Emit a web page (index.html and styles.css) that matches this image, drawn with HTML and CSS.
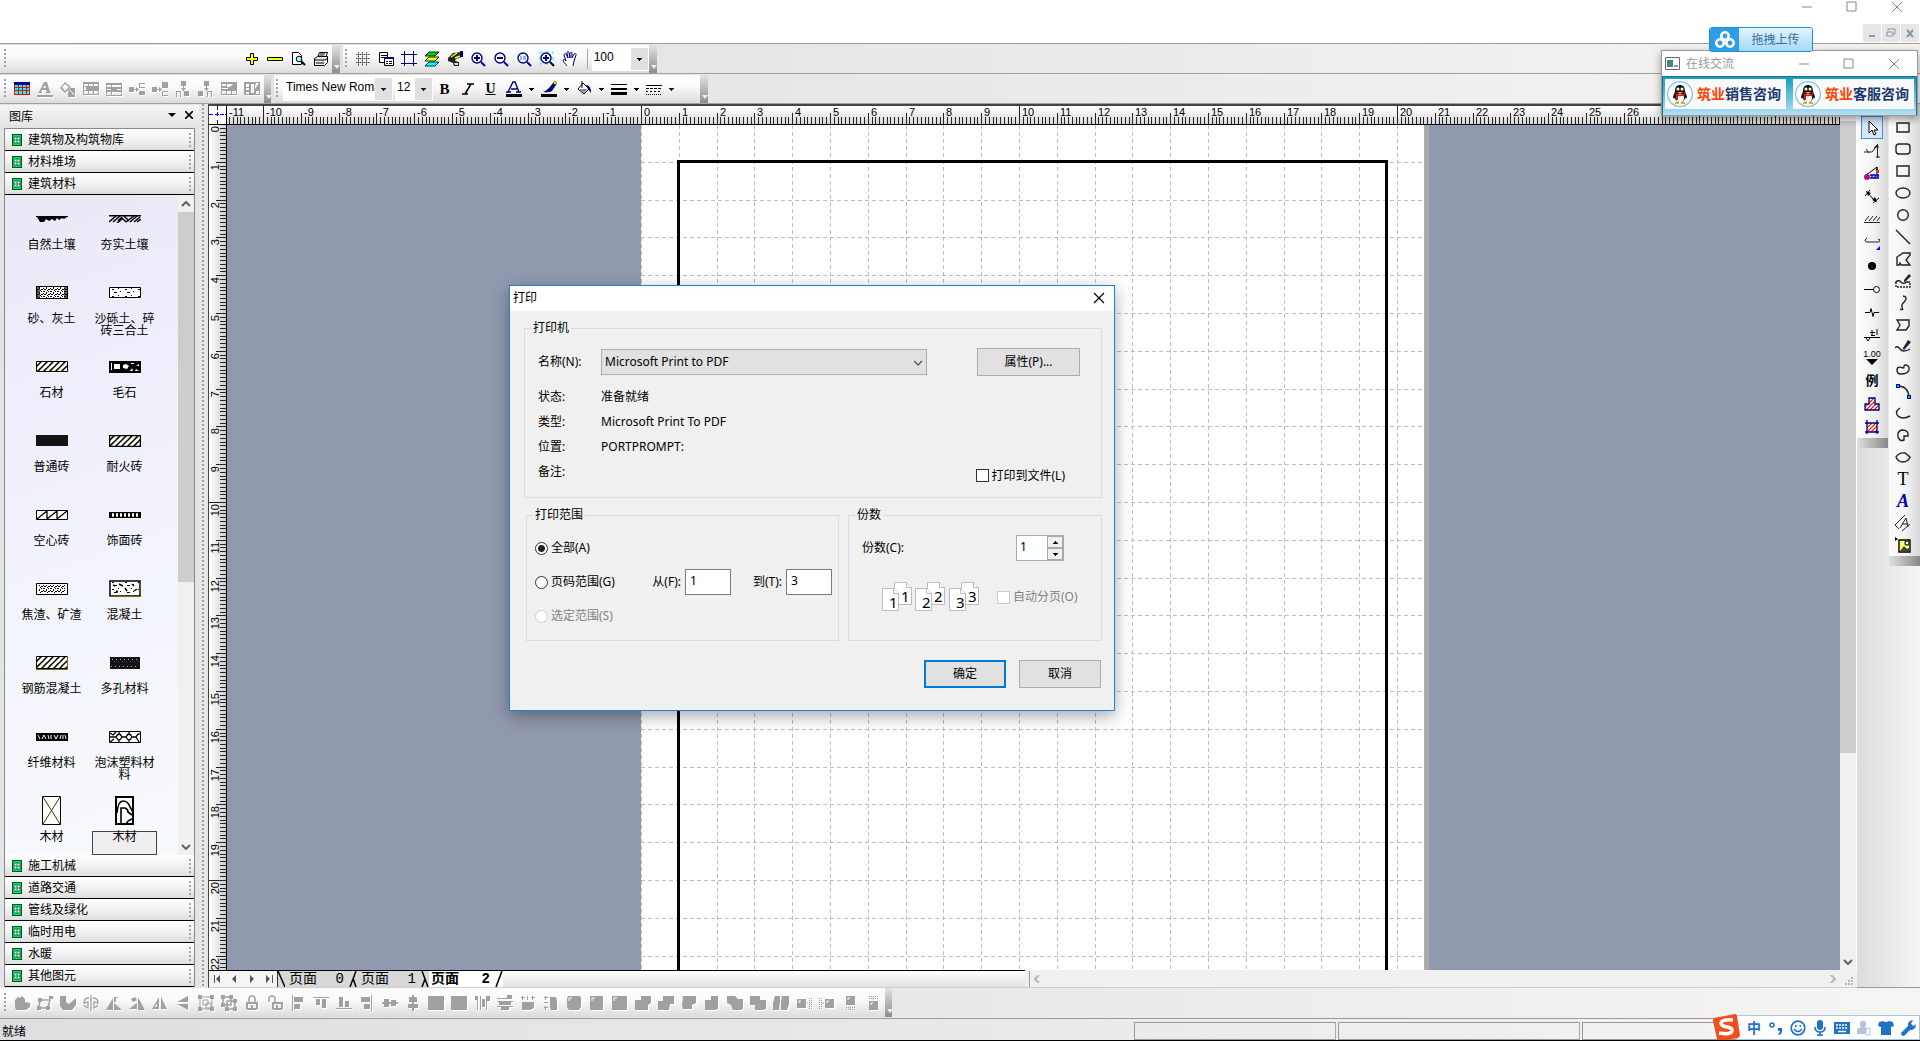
FILE: index.html
```html
<!DOCTYPE html>
<html lang="zh-CN">
<head>
<meta charset="utf-8">
<title>打印</title>
<link rel="stylesheet" href="styles.css">
</head>
<body>
<svg class="defs" aria-hidden="true">
  <defs>
    <pattern id="p-hatch" width="6" height="6" patternUnits="userSpaceOnUse"><path d="M-1 7L7-1M-1 1L1-1M5 7L7 5" stroke="#000" stroke-width="1.5"/><path d="M1 4L4 1" stroke="#606000" stroke-width=".9"/></pattern>
    <pattern id="p-dense" width="7" height="5" patternUnits="userSpaceOnUse"><path d="M0 0h2v1h-2zM3 1h1v2h-1zM5 0h1v1h-1zM1 3h2v1h-2zM5 3h2v1h-2zM4 4h1v1h-1zM0 2h1v1h-1z" fill="#000"/></pattern>
    <pattern id="p-sparse" width="13" height="7" patternUnits="userSpaceOnUse"><path d="M3 2h2v1h-2zM9 1h1v1h-1zM5 5h3v1h-3zM11 4h1v1h-1z" fill="#000"/></pattern>
    <pattern id="p-red" width="4" height="4" patternUnits="userSpaceOnUse"><rect width="4" height="4" fill="#fff"/><path d="M-1 5L5-1M-1 1L1-1M3 5L5 3" stroke="#f00" stroke-width="1.2"/></pattern>
    <symbol id="lib" viewBox="0 0 10 12"><path d="M0 0h10v12H0z" fill="#00562c"/><path d="M1 1h8v10H1z" fill="#00e060"/><path d="M2 3h6v6H2z" fill="#fff"/><path d="M2 3h6v6H2zM5 3v6M2 6h6" fill="none" stroke="#008040"/></symbol>
    <symbol id="up" viewBox="0 0 10 6"><path d="M1 5l4-4 4 4" fill="none" stroke="currentColor" stroke-width="2"/></symbol>
    <symbol id="down" viewBox="0 0 10 6"><path d="M1 1l4 4 4-4" fill="none" stroke="currentColor" stroke-width="2"/></symbol>
    <symbol id="tri" viewBox="0 0 5 3"><path d="M0 0h5v1H0zM1 1h3v1H1zM2 2h1v1H2z"/></symbol>
    <symbol id="penguin" viewBox="0 0 26 28"><circle cx="13" cy="14" r="12.4" fill="#fff" stroke="#7ec8f0" stroke-width="1.4"/><path d="M6 17c0-2 2-4 2-6 0-4 2-6 5-6s5 2 5 6c0 2 2 4 2 6 0 1-1 2-2 1 0 2-2 4-5 4s-5-2-5-4c-1 1-2 0-2-1z" fill="#151515"/><ellipse cx="13" cy="18" rx="4" ry="4" fill="#fff"/><circle cx="11" cy="9" r="1.5" fill="#fff"/><circle cx="15" cy="9" r="1.5" fill="#fff"/><path d="M10 12h6l-3 2zM8 22h4v2H8zM14 22h4v2h-4z" fill="#f5a500"/><path d="M8 13q5 3 10 0v2q-4 2-7 1v4H9v-5z" fill="#e01515"/></symbol>
  </defs>
</svg>

<header class="titlebar">
  <div class="win-controls">
    <button aria-label="最小化"><svg width="12" height="12"><path d="M1 6h10"/></svg></button>
    <button aria-label="最大化"><svg width="12" height="12"><path d="M1 1h9v9H1z"/></svg></button>
    <button aria-label="关闭"><svg width="12" height="12"><path d="M1 1l10 10M11 1L1 11"/></svg></button>
  </div>
  <div class="mdi-controls">
    <button aria-label="最小化文档"><svg width="12" height="12"><path d="M3 9h6" stroke-width="2"/></svg></button>
    <button aria-label="还原文档"><svg width="12" height="12"><path d="M3 4V2h7v5H8M2 5h6v4H2z"/></svg></button>
    <button aria-label="关闭文档"><svg width="12" height="12"><path d="M3 3l6 7M9 3l-6 7" stroke-width="2"/></svg></button>
  </div>
</header>

<div class="toolbars">
  <div class="toolrow">
    <div class="toolbar tb-file"><i class="grip"></i><span class="spring"></span>
      <button class="tool" aria-label="添加页"><svg width="16" height="16"><path d="M6.500 2.500h3v4h4v3h-4v4h-3v-4h-4v-3h4z" fill="#ff0" stroke="#000"/></svg></button>
      <button class="tool" aria-label="删除页"><svg width="16" height="16"><path d="M.5 6.500h15v3H.5z" fill="#ff0" stroke="#000"/></svg></button>
      <button class="tool" aria-label="打印预览"><svg width="16" height="16"><path d="M2.500 1.500h6l3 3v9h-9z" fill="#fff" stroke="#000"/><circle cx="9" cy="8" r="2.800" fill="#9ff" stroke="#000"/><path d="M11 10l4 4" stroke="#000" stroke-width="2"/></svg></button>
      <button class="tool" aria-label="打印"><svg width="16" height="16"><path d="M4.500 6.500l2-5h8l-2 5" fill="#fff" stroke="#000"/><path d="M1.500 7.500l3-2h10v6l-3 3h-10z" fill="#eee" stroke="#000"/><path d="M1 9h11l3-2M3 12h8M7 3h5M6 5h5" stroke="#000" fill="none"/><path d="M9 10h2v1H9z" fill="#fd0"/></svg></button>
      <i class="cap"></i></div>
    <div class="toolbar tb-view"><i class="grip"></i>
      <button class="tool" aria-label="网格"><svg width="16" height="16"><path d="M1 3.500h14M1 7.500h14M1 11.500h14M3.500 1v14M7.500 1v14M11.500 1v14" stroke="#333" stroke-dasharray="1 1"/><path d="M1 3.500h14M1 7.500h14M1 11.500h14M3.500 1v14M7.500 1v14M11.500 1v14" stroke="#555" stroke-width=".6"/></svg></button>
      <button class="tool" aria-label="页面设置"><svg width="16" height="16"><path d="M1.500 1.500h8v10h-8z" fill="#fff" stroke="#000"/><path d="M3 4.500h6M3 6.500h3" stroke="#000"/><path d="M6.500 6.500h9v8h-9z" fill="#fff" stroke="#000"/><path d="M6 7h10" stroke="#006" stroke-width="2"/><path d="M8 10.500h2M11 10.500h3M8 12.500h2M11 12.500h3" stroke="#000"/></svg></button>
      <button class="tool" aria-label="裁剪框"><svg width="16" height="16"><path d="M3.500 0v15M12.500 0v15M0 3.500h16M0 12.500h16" stroke="#000080"/></svg></button>
      <button class="tool" aria-label="图层"><svg width="16" height="16"><path d="M1 5l4-4h10l-4 4z" fill="#0c0" stroke="#030"/><path d="M1 10l4-4h10l-4 4z" fill="#ff0" stroke="#030"/><path d="M1 15l4-4h10l-4 4z" fill="#0ff" stroke="#033"/></svg></button>
      <button class="tool" aria-label="格式刷"><svg width="16" height="16"><path d="M1 7l5-5 9-1v5l-6 2-1 2 4 1v4H7l-1-3-5-2z" fill="#222"/><path d="M4 6l6-4M8 7l5-2" stroke="#ff0" stroke-width="1.500"/><path d="M7 12h4v2H8z" fill="#ddd"/><path d="M13 0h3v6h-3z" fill="#008"/></svg></button>
      <button class="tool" aria-label="放大"><svg width="16" height="16"><circle cx="7" cy="7" r="5" fill="#fff" stroke="#000080" stroke-width="1.400"/><path d="M11 11l4 4" stroke="#000080" stroke-width="2"/><path d="M4 7h6M7 4v6" stroke="#000080" stroke-width="2"/></svg></button>
      <button class="tool" aria-label="缩小"><svg width="16" height="16"><circle cx="7" cy="7" r="5" fill="#fff" stroke="#000080" stroke-width="1.400"/><path d="M11 11l4 4" stroke="#000080" stroke-width="2"/><path d="M4 7h6" stroke="#000080" stroke-width="2"/></svg></button>
      <button class="tool" aria-label="原始大小"><svg width="16" height="16"><circle cx="7" cy="7" r="5" fill="#eff" stroke="#000080" stroke-width="1.400"/><path d="M11 11l4 4" stroke="#000080" stroke-width="2"/><path d="M5 5v4M9 5v4M7 6h1M7 8h1" stroke="#56a"/></svg></button>
      <button class="tool" aria-label="适合页面"><svg width="16" height="16"><path d="M1 1h13v12H1z" fill="none" stroke="#0ff" stroke-dasharray="3 3"/><circle cx="7" cy="7" r="5" fill="#fff" stroke="#000080" stroke-width="1.400"/><path d="M11 11l4 4" stroke="#003" stroke-width="2"/><path d="M4 7h6M7 4v6" stroke="#000080" stroke-width="2"/></svg></button>
      <button class="tool" aria-label="平移"><svg width="16" height="16"><path d="M5 15c-1-2-4-4-4-6 1-1 2 0 3 1L2 4c0-1 1-2 2-1l2 4-1-5c0-2 2-2 2 0l1 5V2c1-1 2-1 2 0v5l2-4c1-1 3 0 2 1l-2 6-1 5" fill="#fff" stroke="#000080"/></svg></button>
      <i class="sep"></i>
      <span class="combo c-zoom"><select aria-label="缩放比例"><option>100</option></select><svg width="5" height="3"><use href="#tri"/></svg></span>
      <i class="cap"></i></div>
  </div>
  <div class="toolrow">
    <div class="toolbar tb-table"><i class="grip"></i>
      <button class="tool" aria-label="表格"><svg width="16" height="14"><path d="M0 0h16v13H0z" fill="#000090"/><path d="M1 3h14v9H1z" fill="#0ff"/><path d="M1 5.500h14M1 8.500h14M4.500 3v9M8.500 3v9M12.500 3v9M.5 3v9.500h15V3" stroke="#f00" fill="none"/></svg></button>
      <button class="tool off" aria-label="文字颜色"><svg width="16" height="16"><path d="M0 14h16v2H0zM1 12v-1h1l5-10h3l3 10h1v1h-5v-1h1l-1-2H5l-1 2h1v1zM6 7h3L8 4z"/></svg></button>
      <button class="tool off" aria-label="填充"><svg width="16" height="16"><path d="M5 1l6 5-6 6-5-5zM9 7h6v9H8v-4zM2 6l3 4 4-4-4-3z" fill-rule="evenodd"/><path d="M10 9l4 5" stroke="#fff"/></svg></button>
      <button class="tool off" aria-label="合并单元格"><svg width="16" height="14"><path d="M0 0h16v13H0zM1 2h4v2H1zM6 2h4v2H6zM11 2h4v2h-4zM1 9h4v3H1zM6 9h4v3H6zM11 9h4v3h-4zM1 5h2v3H1z" fill-rule="evenodd"/></svg></button>
      <button class="tool off" aria-label="拆分单元格"><svg width="16" height="14"><path d="M0 1h16v13H0zM1 3h4v2H1zM6 3h9v2H6zM1 7h4v1H1zM11 7h4v1h-4zM1 10h4v3H1zM6 10h9v3H6z" fill-rule="evenodd"/></svg></button>
      <button class="tool off" aria-label="左侧插入列"><svg width="16" height="14"><path d="M0 5h5v5H0zM5 7h5v1H5zM7 5l3 2.500L7 10zM10 1h6v1h-5v3h5v1h-6zM10 9h6v4h-6z"/></svg></button>
      <button class="tool off" aria-label="右侧插入列"><svg width="16" height="14"><path d="M0 5h5v5H0zM5 7h5v1H5zM7 5l3 2.500L7 10zM10 0h6v6h-6zM10 9h6v1h-5v3h5v1h-6z"/></svg></button>
      <button class="tool off" aria-label="上方插入行"><svg width="16" height="16"><path d="M6 0h5v5H6zM8 5h1v5H8zM6 7h5L8.500 10zM1 10h5v6H5v-5H2v5H1zM9 10h5v5H9z"/></svg></button>
      <button class="tool off" aria-label="下方插入行"><svg width="16" height="16"><path d="M6 0h5v5H6zM8 5h1v5H8zM6 7h5L8.500 10zM0 10h5v5H0zM9 10h5v6h-1v-5h-3v5H9z"/></svg></button>
      <button class="tool off" aria-label="编辑行"><svg width="16" height="14"><path d="M0 0h16v13H0zM1 2h4v2H1zM6 2h6L9 5H6zM1 9h4v3H1zM6 9h4v3H6zM11 9h4v3h-4zM1 6h6v1H1z" fill-rule="evenodd"/></svg></button>
      <button class="tool off" aria-label="编辑列"><svg width="16" height="14"><path d="M0 0h16v13H0zM2 2h3v3H2zM7 2h3v9H7zM12 1h3l-4 6V4zM2 6h3v2H2zM2 10h3v2H2zM12 9h3v3h-3z" fill-rule="evenodd"/></svg></button>
      <i class="cap"></i></div>
    <div class="toolbar tb-format"><i class="grip"></i>
      <span class="combo c-font"><select aria-label="字体"><option>Times New Roman</option></select><svg width="5" height="3"><use href="#tri"/></svg></span>
      <span class="combo c-size"><select aria-label="字号"><option>12</option></select><svg width="5" height="3"><use href="#tri"/></svg></span>
      <button class="tool letter" aria-label="加粗"><b>B</b></button>
      <button class="tool" aria-label="倾斜"><svg width="16" height="16"><path d="M7 3h7M2 13h6M11 3l-6 10" stroke="#000" stroke-width="1.600"/></svg></button>
      <button class="tool letter" aria-label="下划线"><u>U</u></button>
      <button class="tool" aria-label="字体颜色"><svg width="16" height="16"><path d="M0 13h16v3H0z"/><path d="M2 11l5-10h2l4 10M5 8h6M0 11h5M10 11h5" stroke="#000080" stroke-width="1.400" fill="none"/></svg></button><button class="drop" aria-label="更多字体颜色"><svg width="5" height="3"><use href="#tri"/></svg></button>
      <button class="tool" aria-label="线条颜色"><svg width="16" height="16"><path d="M0 13h16v3H0z"/><path d="M2 11q3-1 6-4l4-5 3 2-4 6q-3 2-9 1z" fill="#000080"/><path d="M12 2l2-2 2 2-1 2z" fill="#fe0" stroke="#000" stroke-width=".5"/></svg></button><button class="drop" aria-label="更多线条颜色"><svg width="5" height="3"><use href="#tri"/></svg></button>
      <button class="tool" aria-label="填充颜色"><svg width="16" height="16"><path d="M7 2l6 6-5 5-6-5zM6 0v7" fill="#fff" stroke="#000"/><path d="M3 8h9l-4 4z" fill="#888"/><path d="M10 4q5 0 5 8l-3-4z" fill="#000080"/></svg></button><button class="drop" aria-label="更多填充颜色"><svg width="5" height="3"><use href="#tri"/></svg></button>
      <button class="tool" aria-label="线宽"><svg width="16" height="16"><path d="M0 3h16v1H0zM0 7h16v2H0zM0 11h16v3H0z"/></svg></button><button class="drop" aria-label="更多线宽"><svg width="5" height="3"><use href="#tri"/></svg></button>
      <button class="tool" aria-label="线型"><svg width="16" height="16"><path d="M0 4.500h16" stroke="#000"/><path d="M0 7.500h16" stroke="#000" stroke-dasharray="3 1"/><path d="M0 10.500h16" stroke="#000" stroke-dasharray="2 2"/><path d="M0 13.500h16" stroke="#000" stroke-dasharray="1 1"/></svg></button><button class="drop" aria-label="更多线型"><svg width="5" height="3"><use href="#tri"/></svg></button>
      <span class="spring"></span><i class="cap"></i></div>
  </div>
</div>

<main class="main">
  <aside class="sidebar">
    <div class="side-head"><h2>图库</h2><button aria-label="选项"><svg width="8" height="4"><path d="M0 0h8L4 4z"/></svg></button><button aria-label="关闭图库"><svg width="8" height="8"><path d="M0 0l8 8M8 0L0 8" stroke="#000" stroke-width="1.600"/></svg></button></div>
    <div class="library">
      <button class="cat"><svg width="10" height="12"><use href="#lib"/></svg>建筑物及构筑物库</button>
      <button class="cat"><svg width="10" height="12"><use href="#lib"/></svg>材料堆场</button>
      <button class="cat"><svg width="10" height="12"><use href="#lib"/></svg>建筑材料</button>
      <div class="shapes">
        <div class="shape-grid">
          <div class="shape"><svg width="32" height="6"><path d="M0 .5h32" stroke="#000"/><path d="M1 1h30l-3 2-2-1-3 2-2-2-2 3-3-2-3 2-3-2-2 3-4 0z"/></svg><span>自然土壤</span></div>
          <div class="shape"><svg width="32" height="8"><path d="M0 .5h32" stroke="#000" stroke-width="2"/><path d="M0 7l7-6M4 7l7-6M9 6l3-3M12 2l5 5M15 1l5 5M17 7l8-6M21 7l7-6M25 7l6-5M8 8l5-4M28 7l4-3" stroke="#000" stroke-width="1.500"/></svg><span>夯实土壤</span></div>
          <div class="shape"><svg width="32" height="13"><path d="M.5.5h31v12H.5z" fill="#fff" stroke="#000"/><path d="M1 1h31v12H1z" fill="url(#p-dense)"/><path d="M0 0h4v13H0zM28 0h4v13h-4z" fill-opacity=".6"/></svg><span>砂、灰土</span></div>
          <div class="shape"><svg width="32" height="11"><path d="M.5.5h31v10H.5z" fill="#fff" stroke="#000"/><path d="M1 1h30v9H1z" fill="url(#p-sparse)"/></svg><span>沙砾土、碎砖三合土</span></div>
          <div class="shape"><svg width="32" height="11"><path d="M.5.5h31v10H.5z" fill="#fff"/><path d="M.5.5h31v10H.5z" fill="url(#p-hatch)" stroke="#000"/></svg><span>石材</span></div>
          <div class="shape"><svg width="32" height="12"><path d="M0 0h32v12H0z"/><path d="M5 3h6v5H5zM2 2h1v7H2zM14 4l3-1 3 2-2 3-4-1zM22 2h3v1h-3zM27 5l3-2v2zM23 7l1 3h-3zM27 8l3 2h-4z" fill="#fff"/></svg><span>毛石</span></div>
          <div class="shape"><svg width="32" height="11"><path d="M0 0h32v11H0z" fill="#141414"/></svg><span>普通砖</span></div>
          <div class="shape"><svg width="32" height="12"><path d="M.5.5h31v11H.5z" fill="#fff"/><path d="M.5.5h31v11H.5z" fill="url(#p-hatch)" stroke="#000" stroke-width="1.500"/></svg><span>耐火砖</span></div>
          <div class="shape"><svg width="32" height="10"><path d="M.5.5h31v9H.5z" fill="#fff" stroke="#000"/><path d="M1 9L11 1v8L21 1v8L31 1" fill="none" stroke="#000" stroke-width="1.300"/></svg><span>空心砖</span></div>
          <div class="shape"><svg width="32" height="6"><path d="M.5.5h31v5H.5z" fill="#fff" stroke="#000" stroke-width="1.500"/><path d="M1 3h30" stroke="#000" stroke-width="5" stroke-dasharray="2 2"/></svg><span>饰面砖</span></div>
          <div class="shape"><svg width="32" height="12"><path d="M.5.5h31v11H.5z" fill="#fff" stroke="#000"/><path d="M3 2h26v8H3z" fill="url(#p-dense)"/></svg><span>焦渣、矿渣</span></div>
          <div class="shape"><svg width="32" height="17"><path d="M1 1h30v15H1z" fill="#fff" stroke="#000" stroke-width="1.500"/><path d="M2 2h28v13H2z" fill="url(#p-sparse)"/><path d="M1 16.500h31V0" fill="none" stroke="#707000"/><path d="M4 5l2 1M10 4l4 2M16 8l2 3M23 4l2 2M25 11l3-2M7 11l2 1" stroke="#000" stroke-width="1.500"/></svg><span>混凝土</span></div>
          <div class="shape"><svg width="32" height="14"><path d="M.5.5h31v12H.5z" fill="#fff"/><path d="M.5.5h31v12H.5z" fill="url(#p-hatch)" stroke="#000"/><path d="M0 13.500h31.500V1" fill="none" stroke="#707000"/></svg><span>钢筋混凝土</span></div>
          <div class="shape"><svg width="30" height="12"><path d="M0 0h30v12H0z" fill="#141414"/><path d="M2 2.500h27M1 9.500h27" stroke="#aaa" stroke-dasharray="1 3"/><path d="M4 4.500h25" stroke="#555" stroke-dasharray="1 3"/></svg><span>多孔材料</span></div>
          <div class="shape"><svg width="32" height="8"><path d="M0 0h32v8H0z"/><path d="M2 2l2 4M6 6l2-4 2 4M12 2l1 4M15 2v4M18 2l2 4 2-4M24 6l1-4M27 2v4M29 2l1 4" stroke="#fff" fill="none"/></svg><span>纤维材料</span></div>
          <div class="shape"><svg width="32" height="12"><path d="M.5.5h31v11H.5z" fill="#fff" stroke="#000"/><path d="M1 2l3 2 3-3M7 6q3-6 6 0-3 6-6 0M17 6q3-6 6 0-3 6-6 0M27 6q2-4 4-3M1 6l6 0M13 6h4M23 6h4M1 11l4-3M10 1v2M10 9v2M20 1v2M20 9v2M27 6l3 5" fill="none" stroke="#000" stroke-width="1.300"/></svg><span>泡沫塑料材料</span></div>
          <div class="shape"><svg width="19" height="29"><path d="M.5.5h18v28H.5z" fill="#fff" stroke="#000"/><path d="M1 1l17 27M18 1L1 28" stroke="#3c3c00"/></svg><span>木材</span></div>
          <div class="shape"><svg width="19" height="29"><path d="M1 1h17v27H1z" fill="#fff" stroke="#000" stroke-width="2"/><path d="M2 17Q3 5 8 5t7 6l3 5M6 28V12h4q3 1 3 4l4 3M11 28q2-4 6-5" fill="none" stroke="#000" stroke-width="1.600"/></svg><span class="picked">木材</span></div>
        </div>
        <div class="vscroll lib-scroll"><button aria-label="向上滚动"><svg width="10" height="6"><use href="#up"/></svg></button><i class="thumb"></i><button aria-label="向下滚动"><svg width="10" height="6"><use href="#down"/></svg></button></div>
      </div>
      <button class="cat"><svg width="10" height="12"><use href="#lib"/></svg>施工机械</button>
      <button class="cat"><svg width="10" height="12"><use href="#lib"/></svg>道路交通</button>
      <button class="cat"><svg width="10" height="12"><use href="#lib"/></svg>管线及绿化</button>
      <button class="cat"><svg width="10" height="12"><use href="#lib"/></svg>临时用电</button>
      <button class="cat"><svg width="10" height="12"><use href="#lib"/></svg>水暖</button>
      <button class="cat"><svg width="10" height="12"><use href="#lib"/></svg>其他图元</button>
    </div>
  </aside>
  <div class="splitter"></div>

  <section class="workspace">
    <div class="view">
      <div class="corner"><svg width="18" height="18"><path d="M0 8.500h5M11 8.500h7M8.500 0v4M8.500 14v4M8.500 6v5M6 8.500h5" stroke="#00f" stroke-dasharray="4 1"/></svg></div>
      <svg class="ruler-h" id="ruler-h"></svg>
      <svg class="ruler-v" id="ruler-v"></svg>
      <div class="canvas"><svg class="paper" id="paper"></svg></div>
    </div>
    <div class="vscroll page-scroll"><button aria-label="向上滚动"><svg width="10" height="6"><use href="#up"/></svg></button><i class="thumb"></i><button aria-label="向下滚动"><svg width="10" height="6"><use href="#down"/></svg></button></div>
    <div class="tabs">
      <button class="nav" aria-label="第一页"><svg width="8" height="8"><path d="M0 0h1v8H0zM6 0v8L2 4z"/></svg></button>
      <button class="nav" aria-label="上一页"><svg width="8" height="8"><path d="M5 0v8L1 4z"/></svg></button>
      <button class="nav" aria-label="下一页"><svg width="8" height="8"><path d="M2 0v8l4-4z"/></svg></button>
      <button class="nav" aria-label="最后一页"><svg width="8" height="8"><path d="M7 0h1v8H7zM1 0v8l4-4z"/></svg></button>
      <svg class="slash" width="8" height="16"><path d="M1 0l7 16M0 0v16" stroke="#000" stroke-width="1.500"/></svg>
      <button class="tab">页面<span>0</span></button>
      <svg class="slash" width="8" height="16"><path d="M7 0L1 16M4 7l3 9" stroke="#000" stroke-width="1.500"/></svg>
      <button class="tab">页面<span>1</span></button>
      <svg class="slash" width="8" height="16"><path d="M1 0l6 16M4 8L1 16" stroke="#000" stroke-width="1.500"/></svg>
      <button class="tab active">页面<span>2</span></button>
      <svg class="slash" width="8" height="16"><path d="M7 0L1 16" stroke="#000" stroke-width="1.500"/></svg>
    </div>
    <div class="hscroll"><i class="hsplit"></i><button aria-label="向左滚动"><svg width="6" height="8"><path d="M5 0L1 4l4 4" fill="none" stroke="#b8b8b8" stroke-width="2"/></svg></button><button aria-label="向右滚动"><svg width="6" height="8"><path d="M1 0l4 4-4 4" fill="none" stroke="#b8b8b8" stroke-width="2"/></svg></button></div>
    <div class="sizegrip"><svg width="8" height="8"><path d="M6 0h2v2H6zM3 3h2v2H3zM6 3h2v2H6zM0 6h2v2H0zM3 6h2v2H3zM6 6h2v2H6z" fill="#b8b8b8"/></svg></div>
  </section>

  <nav class="dock">
    <div class="dockcol dock-a">
      <button class="picked" aria-label="选择"><svg width="16" height="16"><path d="M5 1v12l3-3 2 5 2-1-2-4h4z" fill="#fff" stroke="#000"/></svg></button>
      <button aria-label="标高线"><svg width="16" height="16"><path d="M0 9h8L14 1M2 6l3 4M13.500 1v14M12 14h4M10 5l4-4M12 4h3" fill="none" stroke="#222"/></svg></button>
      <button aria-label="角度标注"><svg width="16" height="16"><path d="M1 10L13 1v5M13 1v10" fill="none" stroke="#000"/><path d="M6 9h9M6 12h9M8 9v3M11 9v3M14 9v3" stroke="#00c" stroke-width="1.400"/><circle cx="3" cy="11" r="3" fill="#b0157a"/><path d="M12 4h3v3h-3z" fill="#d32"/></svg></button>
      <button aria-label="尺寸标注"><svg width="16" height="16"><path d="M3 3l9 10M1 7l5-6M9 14l6-5" stroke="#000"/><path d="M2 2l5 2-3 3zM13 13l-5-2 3-3z"/></svg></button>
      <button aria-label="地面线"><svg width="16" height="16"><path d="M0 10.500h16M1 9l4-5M5 9l4-5M9 9l4-5M13 9l3-4" stroke="#222"/></svg></button>
      <button aria-label="钢筋"><svg width="16" height="16"><path d="M3 3L1 5q0 2 2 2h11q2 0 2-2l-2-1" fill="none" stroke="#222"/><path d="M16 11v4h-4z" fill="#00f"/></svg></button>
      <button aria-label="圆点"><svg width="16" height="16"><circle cx="8" cy="8" r="4"/></svg></button>
      <button aria-label="节点"><svg width="16" height="16"><path d="M0 8.500h10" stroke="#000"/><circle cx="12.500" cy="8.500" r="3" fill="#fff" stroke="#000"/></svg></button>
      <button aria-label="折断线"><svg width="16" height="16"><path d="M1 8.500h5l1-4 2 8 1-4h5" fill="none" stroke="#000"/></svg></button>
      <button aria-label="正负标高"><svg width="16" height="16"><path d="M0 10.500h16M2 11l2 3 2-3M8 3v5M6 5.500h5M7 8.500h4M13 2v6" fill="none" stroke="#000"/></svg></button>
      <button class="level" aria-label="标高"><span>1.00</span><svg width="12" height="6"><path d="M0 0h12L6 6z"/></svg></button>
      <button class="legend-btn" aria-label="图例">例</button>
      <button aria-label="区域"><svg width="16" height="16"><path d="M5 2h6v6h4v6H1V8h4z" fill="url(#p-red)" stroke="#000080" stroke-width="1.300"/></svg></button>
      <button aria-label="矩形区域"><svg width="16" height="16"><path d="M3 4h10v9H3z" fill="url(#p-red)"/><path d="M3 1v14M13 1v14M1 4h14M1 13h14" stroke="#000080" stroke-width="1.300"/></svg></button>
      <i class="hcap"></i>
    </div>
    <div class="dockcol dock-b">
      <button aria-label="矩形"><svg width="16" height="16"><path d="M2 4h12v9H2z"/></svg></button>
      <button aria-label="圆角矩形"><svg width="16" height="16"><rect x="1" y="3" width="14" height="10" rx="3"/></svg></button>
      <button aria-label="正方形"><svg width="16" height="16"><path d="M2 3h12v10H2z"/></svg></button>
      <button aria-label="椭圆"><svg width="16" height="16"><ellipse cx="8" cy="8" rx="7" ry="5"/></svg></button>
      <button aria-label="圆"><svg width="16" height="16"><circle cx="8" cy="8" r="5.300"/></svg></button>
      <button aria-label="直线"><svg width="16" height="16"><path d="M1 1l14 14"/></svg></button>
      <button aria-label="多边形"><svg width="16" height="16"><path d="M15 2H8L2 6v8h2l1-2 1 2h9l-4-5 4-5z"/></svg></button>
      <button aria-label="自由绘图"><svg width="16" height="16"><path d="M1 9v5h14V9" stroke-dasharray="2 1"/><path d="M0 10q3-4 6-1t5 0l4 0"/><path d="M9 7l5-6 2 2-5 5-2 1z" fill="#222" stroke="none"/></svg></button>
      <button aria-label="曲线"><svg width="16" height="16"><path d="M8 1q5 1 2 5-4 4-3 6 2 4-2 2"/></svg></button>
      <button aria-label="闭合多边形"><svg width="16" height="16"><path d="M2 3h12v6l-3 4H2l3-5z"/></svg></button>
      <button aria-label="画笔"><svg width="16" height="16"><path d="M0 9q2-3 5 1t10 0"/><path d="M8 9l5-8 3 2-6 7z" fill="#222" stroke="none"/><path d="M8 9l2 1" stroke="#22f" stroke-width="2"/></svg></button>
      <button aria-label="闭合曲线"><svg width="16" height="16"><path d="M2 9c0-4 4-3 6-2 2 0 0-3 2-3s5 1 4 5c-1 3-5 4-8 4s-4-2-4-4z"/></svg></button>
      <button aria-label="贝塞尔曲线"><svg width="16" height="16"><path d="M3 3q10 0 11 11"/><path d="M1 1h4v4H1zM12 12h4v4h-4z" fill="#00c" stroke="none"/><path d="M2 2h2v2H2zM13 13h2v2h-2z" fill="#0c6" stroke="none"/></svg></button>
      <button aria-label="圆弧"><svg width="16" height="16"><path d="M5 3q-6 4-2 8t12 0"/></svg></button>
      <button aria-label="饼形"><svg width="16" height="16"><path d="M13 9q1-6-6-6-5 1-4 7 2 5 6 3V9z"/></svg></button>
      <button aria-label="扇形"><svg width="16" height="16"><path d="M1 8q3-5 9-4l5 4q-2 5-7 5T1 8z"/></svg></button>
      <button class="glyph" aria-label="文字">T</button>
      <button class="glyph art" aria-label="艺术字">A</button>
      <button aria-label="旋转文字"><svg width="16" height="16"><path d="M0 10L10 0M5 13L11 3l2 9M7 9h6M0 10l4 4M7 16l8-7" stroke-width="1"/></svg></button>
      <button aria-label="插入图片"><svg width="16" height="16"><path d="M4 3h11v12H4z" fill="#ff6" stroke="#000"/><path d="M5 14l4-5 3 3 3-2v4z" fill="#444" stroke="none"/><circle cx="12" cy="6" r="2" fill="#fff" stroke="#333"/><path d="M0 0l3 2-3 2z" fill="#000" stroke="none"/></svg></button>
      <i class="hcap"></i>
    </div>
  </nav>
</main>

<div class="toolbar tb-arrange"><i class="grip"></i>
  <button class="tool off" aria-label="形状"><svg width="16" height="16"><path d="M1 5l3-3 2 1 2-2 3 3v3l5 1v4l-4 3H2l-1-3z"/></svg></button>
  <button class="tool off" aria-label="编辑顶点"><svg width="16" height="16"><path d="M3 5h10l-2 8H2z" fill="none" stroke="#a0a0a0" stroke-width="1.500"/><path d="M1 3h4v4H1zM0 11h4v4H0zM9 11h4v4H9zM12 1h4v3h-4z"/></svg></button>
  <button class="tool off" aria-label="旋转形状"><svg width="16" height="16"><path d="M0 1h6v6l3 2 7-6v7l-4 5H3l-3-4z"/></svg></button>
  <button class="tool off" aria-label="翻转"><svg width="16" height="16"><path d="M8 0v16M6 3Q1 3 1 8l4-1v6Q2 12 1 10M10 3q5 0 5 5l-4-1v6q3-1 4-3" fill="none" stroke="#a0a0a0" stroke-width="1.300"/></svg></button>
  <button class="tool off" aria-label="向左旋转"><svg width="16" height="16"><path d="M0 15L7 3v12zM8 8l8 7H8zM8 2h4v1h-2v4H8z"/></svg></button>
  <button class="tool off" aria-label="向右旋转"><svg width="16" height="16"><path d="M9 2l7 13H9zM0 14l8-6v6zM2 4l4-2 2 3-4 2z"/></svg></button>
  <button class="tool off" aria-label="水平翻转"><svg width="16" height="16"><path d="M7 2v12H0zM9 2v12h6zM5 8v4H3z" fill-rule="evenodd"/></svg></button>
  <button class="tool off" aria-label="垂直翻转"><svg width="16" height="16"><path d="M13 1v6H2zM2 9h11v6z"/></svg></button>
  <button class="tool off" aria-label="组合"><svg width="16" height="16"><path d="M2 2h12v12H2zM5 5h5v5H5zM8 8h5v5H8z" fill="none" stroke="#a0a0a0"/><path d="M0 0h4v4H0zM12 0h4v4h-4zM0 12h4v4H0zM12 12h4v4h-4z"/></svg></button>
  <button class="tool off" aria-label="取消组合"><svg width="16" height="16"><path d="M2 2h8v8H2zM6 6h8v8H6z" fill="none" stroke="#a0a0a0" stroke-width="1.500"/><path d="M0 0h4v4H0zM8 0h4v4H8zM0 8h4v4H0zM12 12h4v4h-4zM4 12h4v4H4zM12 4h4v4h-4z"/></svg></button>
  <button class="tool off" aria-label="锁定"><svg width="16" height="16"><path d="M5 8V4q0-3 3-3t3 3v4" fill="none" stroke="#a0a0a0" stroke-width="1.500"/><path d="M2 7h12v7l-2 1H4l-2-1zM4 9v4h3v-3h2v3h3V9z" fill-rule="evenodd"/></svg></button>
  <button class="tool off" aria-label="解锁"><svg width="16" height="16"><path d="M2 7V4q0-3 3-3t3 3v4" fill="none" stroke="#a0a0a0" stroke-width="1.500"/><path d="M5 7h11v7l-2 1H7l-2-1zM7 9v4h2v-3h2v3h3V9z" fill-rule="evenodd"/></svg></button>
  <button class="tool off" aria-label="左对齐"><svg width="16" height="16"><path d="M2 0h1v16H2zM4 2h9v5H4zM4 9h6v5H4z"/></svg></button>
  <button class="tool off" aria-label="顶端对齐"><svg width="16" height="16"><path d="M0 2h16v1H0zM3 4h4v6H3zM9 4h4v9H9z"/></svg></button>
  <button class="tool off" aria-label="底端对齐"><svg width="16" height="16"><path d="M0 13h16v1H0zM3 2h4v10H3zM9 6h4v6H9z"/></svg></button>
  <button class="tool off" aria-label="右对齐"><svg width="16" height="16"><path d="M12 0h1v16h-1zM2 2h9v5H2zM5 9h6v5H5z"/></svg></button>
  <button class="tool off" aria-label="垂直居中"><svg width="16" height="16"><path d="M0 7h16v2H0zM2 4h5v8H2zM9 5h5v6H9z"/></svg></button>
  <button class="tool off" aria-label="水平居中"><svg width="16" height="16"><path d="M7 0h2v16H7zM4 2h8v5H4zM3 9h10v4H3z"/></svg></button>
  <button class="tool off" aria-label="等宽"><svg width="16" height="16"><path d="M0 1h16v14H0z"/></svg></button>
  <button class="tool off" aria-label="等高"><svg width="16" height="16"><path d="M0 1h16v14H0z"/></svg></button>
  <button class="tool off" aria-label="横向分布"><svg width="16" height="16"><path d="M1 1h3v14H3V5H1zM6 1h1v14H6zM8 4h3v8H8zM12 1h4v5h-3v9h-1z"/></svg></button>
  <button class="tool off" aria-label="纵向分布"><svg width="16" height="16"><path d="M0 3h10V0h5v4H0zM0 6h16v1H0zM2 7h12v3H2zM0 11h16v1H0zM4 12h8v3H4z"/></svg></button>
  <button class="tool off" aria-label="横向间距"><svg width="16" height="16"><path d="M1 2h4v1H1zM3 1v4H2V1zM7 1h1v4H7zM11 2h4v1h-4zM13 1v4h-1V1zM2 7h12v6l-4 2H2z"/></svg></button>
  <button class="tool off" aria-label="纵向间距"><svg width="16" height="16"><path d="M1 2h4v1H1zM2 1h1v4H2zM1 7h4v1H1zM1 12h4v1H1zM2 11h1v4H2zM7 2h6l1 4v9H8l-1-3z"/></svg></button>
  <button class="tool off" aria-label="置于顶层"><svg width="16" height="16"><path d="M2 1h12l1 2v9l-2 3H3l-2-3V3z"/><path d="M3 6V3h3" fill="none" stroke="#fff"/></svg></button>
  <button class="tool off" aria-label="置于底层"><svg width="16" height="16"><path d="M1 1h13v14H1z"/><path d="M3 6V3h3" fill="none" stroke="#fff"/></svg></button>
  <button class="tool off" aria-label="上移一层"><svg width="16" height="16"><path d="M0 1h15v14H0z"/><path d="M2 6V3h3" fill="none" stroke="#fff"/></svg></button>
  <button class="tool off" aria-label="联合"><svg width="16" height="16"><path d="M6 1h10v7l-3 2v5H0V5h6z"/></svg></button>
  <button class="tool off" aria-label="下移一层"><svg width="16" height="16"><path d="M5 1h11v8h-4l-1 6H0V6h5z"/></svg></button>
  <button class="tool off" aria-label="减除"><svg width="16" height="16"><path d="M2 1h13v7l-4 2v4H2l-1-4z"/></svg></button>
  <button class="tool off" aria-label="相交"><svg width="16" height="16"><path d="M1 5h6V1h7v13l-3 1H1z"/></svg></button>
  <button class="tool off" aria-label="剪除"><svg width="16" height="16"><path d="M0 1h8l3 3h5v10l-3 1H6l-2-5-4-2z"/></svg></button>
  <button class="tool off" aria-label="拼合"><svg width="16" height="16"><path d="M0 1h10v4h6v9l-3 1H5v-5H0z"/></svg></button>
  <button class="tool off" aria-label="分割"><svg width="16" height="16"><path d="M2 1h5v6L6 15H0V8zM9 1h7v8l-2 6H8V7z"/></svg></button>
  <button class="tool off" aria-label="左贴合"><svg width="16" height="16"><path d="M1 4h9v9H1z"/><path d="M11 8h3M13.500 3v11M15.500 3v11" stroke="#a0a0a0" stroke-dasharray="1 1"/><path d="M3 8V6h2" stroke="#fff" fill="none"/></svg></button>
  <button class="tool off" aria-label="右贴合"><svg width="16" height="16"><path d="M6 4h9v9H6z"/><path d="M2 8h3M.5 3v11M2.500 3v11" stroke="#a0a0a0" stroke-dasharray="1 1"/><path d="M8 8V6h2" stroke="#fff" fill="none"/></svg></button>
  <button class="tool off" aria-label="上贴合"><svg width="16" height="16"><path d="M4 1h9v9H4z"/><path d="M8 11v3M4 12.500h9M4 14.500h9" stroke="#a0a0a0" stroke-dasharray="1 1"/><path d="M6 5V3h2" stroke="#fff" fill="none"/></svg></button>
  <button class="tool off" aria-label="下贴合"><svg width="16" height="16"><path d="M4 6h9v9H4z"/><path d="M8 2v3M4 1.500h9M4 3.500h9" stroke="#a0a0a0" stroke-dasharray="1 1"/><path d="M6 10V8h2" stroke="#fff" fill="none"/></svg></button>
  <i class="cap"></i></div>

<footer class="statusbar"><span class="ready">就绪</span><span class="cell c1"></span><span class="cell c2"></span><span class="cell c3"></span></footer>

<form class="dialog" role="dialog" aria-labelledby="dlg-title">
  <div class="dlg-title"><h1 id="dlg-title">打印</h1><button type="button" aria-label="关闭"><svg width="12" height="12"><path d="M1 1l10 10M11 1L1 11" stroke="#000" stroke-width="1.200"/></svg></button></div>
  <div class="dlg-body">
    <fieldset class="printer">
      <legend>打印机</legend>
      <div class="prow first"><label for="pname">名称(N):</label><span class="select"><select id="pname"><option>Microsoft Print to PDF</option></select><svg width="9" height="6"><path d="M0 1l4 4 4-4" fill="none" stroke="#444" stroke-width="1.200"/></svg></span><button type="button" class="btn props">属性(P)...</button></div>
      <div class="prow"><span class="k">状态:</span><span>准备就绪</span></div>
      <div class="prow"><span class="k">类型:</span><span>Microsoft Print To PDF</span></div>
      <div class="prow"><span class="k">位置:</span><span>PORTPROMPT:</span></div>
      <div class="prow"><span class="k">备注:</span><label class="check tofile"><input type="checkbox">打印到文件(L)</label></div>
    </fieldset>
    <div class="pair">
      <fieldset class="range">
        <legend>打印范围</legend>
        <div class="rrow"><label class="check"><input type="radio" name="range" checked>全部(A)</label></div>
        <div class="rrow"><label class="check pages"><input type="radio" name="range">页码范围(G)</label><label class="from">从(F):<input type="text" value="1"></label><label class="to">到(T):<input type="text" value="3"></label></div>
        <div class="rrow"><label class="check disabled"><input type="radio" name="range" disabled>选定范围(S)</label></div>
      </fieldset>
      <fieldset class="copies">
        <legend>份数</legend>
        <div class="rrow"><label for="copies">份数(C):</label><span class="spin"><input id="copies" type="text" value="1"><span><button type="button" aria-label="增加"><svg width="5" height="3"><path d="M2 0h1v1H2zM1 1h3v1H1zM0 2h5v1H0z"/></svg></button><button type="button" aria-label="减少"><svg width="5" height="3"><use href="#tri"/></svg></button></span></span></div>
        <div class="rrow collate">
          <svg width="100" height="32" class="sheets">
            <g fill="#fff" stroke="#bbb">
              <path d="M13.500 1.500h12l5 5v17h-17zM46.500 1.500h12l5 5v17h-17zM80.500 1.500h12l5 5v17h-17z"/><path d="M25.500 1.500v5h5M58.500 1.500v5h5M92.500 1.500v5h5"/>
              <path d="M1.500 7.500h11l5 5v17h-16zM34.500 7.500h11l5 5v17h-16zM68.500 7.500h11l5 5v17h-16z"/><path d="M12.500 7.500v5h5M45.500 7.500v5h5M79.500 7.500v5h5"/>
            </g>
            <g class="nums"><text x="8" y="27">1</text><text x="20" y="21">1</text><text x="41" y="27">2</text><text x="53" y="21">2</text><text x="75" y="27">3</text><text x="87" y="21">3</text></g>
          </svg>
          <label class="check disabled"><input type="checkbox" disabled>自动分页(O)</label>
        </div>
      </fieldset>
    </div>
    <div class="dlg-foot"><button type="submit" class="btn primary">确定</button><button type="button" class="btn">取消</button></div>
  </div>
</form>

<div class="chat">
  <div class="chat-title"><svg width="16" height="13"><path d="M.5.500h14v12H.5z" fill="#fff" stroke="#667"/><path d="M2 3h6v7H2z" fill="#487"/><path d="M9 8h4v2H9z" fill="#99b"/></svg><span>在线交流</span>
    <div class="win-controls"><button aria-label="最小化交流窗口"><svg width="12" height="12"><path d="M1 6h10"/></svg></button><button aria-label="最大化交流窗口"><svg width="12" height="12"><path d="M1 1h9v9H1z"/></svg></button><button aria-label="关闭交流窗口"><svg width="12" height="12"><path d="M1 1l10 10M11 1L1 11"/></svg></button></div>
  </div>
  <div class="chat-body"><a href="#sales"><svg width="26" height="28"><use href="#penguin"/></svg><b><em>筑业</em>销售咨询</b></a><a href="#service"><svg width="26" height="28"><use href="#penguin"/></svg><b><em>筑业</em>客服咨询</b></a></div>
</div>
<button class="upload"><span class="cloud"><svg width="20" height="18"><g fill="none" stroke="#fff" stroke-width="2.600"><circle cx="10" cy="5" r="3.700"/><circle cx="5" cy="12" r="3.700"/><circle cx="15" cy="12" r="3.700"/></g></svg></span><span class="upload-text">拖拽上传</span></button>

<div class="ime">
  <svg class="ime-logo" width="28" height="28" viewBox="0 0 28 28"><path d="M1 5L22 1q2 0 2 2l3 19q0 2-2 3L7 28q-2 0-3-2L0 8q0-2 1-3z" fill="#f04e1c"/><path d="M20 7Q9 6 8 10q0 3 6 4t5 4q-1 4-13 2" fill="none" stroke="#fff" stroke-width="3.600"/></svg>
  <button class="zh">中</button>
  <button aria-label="标点"><svg width="16" height="16"><circle cx="4" cy="5" r="2" fill="none" stroke="#1f72c8" stroke-width="1.500"/><path d="M10 8h4v3q0 3-3 4l-1-1q2-1 2-3h-2z"/></svg></button>
  <button aria-label="表情"><svg width="16" height="16"><circle cx="8" cy="8" r="6.800" fill="none" stroke="#1f72c8" stroke-width="1.700"/><path d="M5 5h1.500v2H5zM9.500 5H11v2H9.500z"/><path d="M4 9q4 5 8 0" fill="none" stroke="#1f72c8" stroke-width="1.500"/></svg></button>
  <button aria-label="语音"><svg width="16" height="16"><rect x="5" y="0" width="6" height="10" rx="3"/><path d="M3 7q0 5 5 5t5-5M8 12v4M5 15h6" fill="none" stroke="#1f72c8" stroke-width="1.600"/></svg></button>
  <button aria-label="键盘"><svg width="16" height="14"><path d="M0 1h16v12H0z"/><path d="M2 4h12M2 7h12" stroke="#fff" stroke-width="1.500" stroke-dasharray="2 1"/><path d="M4 10.500h8" stroke="#fff" stroke-width="1.500"/></svg></button>
  <button aria-label="账户"><svg width="16" height="16"><g fill="#b4c2dc"><circle cx="7" cy="4" r="3.200"/><path d="M1 14V9q6-4 11 0v5z"/></g><path d="M10 8h4v7h-4z" fill="#fff" stroke="#b4c2dc"/></svg></button>
  <button aria-label="皮肤"><svg width="16" height="16"><path d="M1 2l4-1q3 2 6 0l4 1 1 4-3 1v8H3V7L0 6z"/></svg></button>
  <button aria-label="设置"><svg width="16" height="16"><path d="M1 13l7-7q-1-4 4-6l1 1-2 2 1 2 2 1 2-2q0 6-6 6l-6 6q-3 0-3-3z"/></svg></button>
</div>
<script src="script.js"></script>
</body>
</html>
```
FILE: styles.css
```css
* { box-sizing: border-box; }
html, body { margin: 0; height: 100%; }
body {
  display: flex; flex-direction: column; position: relative; min-height: 100vh; overflow: hidden;
  font: 12px/16px "Liberation Sans", "Noto Sans CJK SC", sans-serif; color: #000;
  background: linear-gradient(to right, #dedede, #f5f4f2); border-bottom: 1px solid #000;
}
button, input, select { font: inherit; color: inherit; margin: 0; padding: 0; border: 0; border-radius: 0; background: none; }
button { display: flex; align-items: center; justify-content: center; }
svg { display: block; flex: none; }
h1, h2 { margin: 0; font: inherit; }
.defs { position: absolute; width: 0; height: 0; }

.titlebar { flex: none; height: 44px; background: #fff; border-bottom: 1px solid #9c9c9c; display: flex; flex-direction: column; align-items: flex-end; justify-content: space-between; }
.win-controls { display: flex; gap: 33px; }
.titlebar .win-controls { padding: 1px 17px 0 0; }
.win-controls svg, .mdi-controls svg { fill: none; stroke: #888; }
.mdi-controls { display: flex; gap: 1px; padding-right: 1px; }
.mdi-controls button { width: 18px; height: 18px; background: #e6e6e6; margin-bottom: 1px; }
.mdi-controls svg { stroke: #8797ad; }

.toolbars { flex: none; }
.toolrow { display: flex; gap: 3px; height: 30px; padding-top: 1px; border-bottom: 1px solid #a0a0a0; }
.toolbar { display: flex; align-items: center; height: 28px; padding-left: 4px; background: linear-gradient(#fdfdfd, #fafafa 40%, #dcdcdc); }
.grip { width: 7px; height: 20px; background: repeating-linear-gradient(#a0a0a0 0 2px, transparent 2px 4px) no-repeat 0 0 / 2px 100%; }
.spring { flex: 1; }
.sep { width: 1px; height: 20px; background: #a8a8a8; margin: 0 4px 0 5px; }
.cap { align-self: stretch; width: 8px; margin-left: auto; background: linear-gradient(#e2e2e2, #8c8c8c); position: relative; }
.cap::after { content: ""; position: absolute; left: 2px; bottom: 4px; border: 3px solid transparent; border-top: 4px solid #f0f0f0; border-bottom: 0; }
.tool { width: 23px; height: 24px; flex: none; }
.off svg { fill: #a0a0a0; filter: drop-shadow(1px 1px 0 #fff); }
.letter { font: 15px/18px "Liberation Serif", serif; }
.letter u { font-weight: bold; font-size: 14px; }
.drop { width: 12px; height: 24px; }
.tb-file { width: 340px; }
.tb-view { width: 314px; padding-left: 2px; }
.tb-table { width: 271px; }
.tb-format { width: 434px; padding-left: 2px; }
.combo { position: relative; display: flex; height: 24px; background: #fff; }
.combo select { appearance: none; width: 100%; padding: 0 17px 5px 3px; font-size: 12px; overflow: hidden; }
.combo svg { position: absolute; right: 1px; top: 1px; width: 17px; height: 22px; padding: 10px 6px 9px; background: #e0e0e0; }
.c-zoom { width: 60px; }
.c-zoom select, .c-size select { padding-left: 2px; }
.c-font { width: 110px; }
.c-size { width: 38px; margin-left: 2px; }

.main { flex: 1; min-height: 0; display: flex; }
.sidebar { width: 199px; flex: none; display: flex; flex-direction: column; padding: 1px 4px; background: #e4e4e4; }
.side-head { display: flex; align-items: center; height: 23px; gap: 9px; margin: 0 -4px; padding: 0 6px 0 9px; background: linear-gradient(#f6f6f6, #e2e2e2); }
.side-head button { margin-bottom: 4px; }
.side-head h2 { flex: 1; }
.library { flex: 1; min-height: 0; display: flex; flex-direction: column; border: 1px solid #888; border-width: 1px 1px 0; }
.cat { flex: none; height: 22px; gap: 6px; justify-content: flex-start; padding: 0 3px 0 7px; border-bottom: 1px solid #000; background: linear-gradient(#fff, #f2f2f2 50%, #dedede); }
.cat::after { content: ""; width: 2px; height: 14px; margin-left: auto; background: repeating-linear-gradient(#a8a8a8 0 2px, transparent 2px 4px); }
.shapes { flex: 1; min-height: 0; display: flex; background: linear-gradient(160deg, #e9e9f5, #eeeffa 30%, #f7fafd); overflow: hidden; }
.shape-grid { flex: 1; display: grid; grid-template-columns: 73px 73px; grid-auto-rows: 74px; padding-left: 10px; overflow: hidden; }
.shape { display: flex; flex-direction: column; align-items: center; padding-top: 3px; }
.shape svg { margin: auto 0; }
.shape span { flex: none; width: 65px; height: 30px; padding: 0 2px; font-size: 12px; line-height: 12px; text-align: center; }
.shape .picked { height: 24px; margin-bottom: 6px; border: 1px solid #444; background: #efefef; line-height: 11px; }
.vscroll { width: 16px; display: flex; flex-direction: column; background: #f0f0f0; color: #606060; }
.vscroll button { flex: none; height: 17px; }
.vscroll .thumb { background: #cdcdcd; }
.vscroll button:last-child { margin-top: auto; }
.lib-scroll .thumb { height: 56%; }
.splitter { width: 9px; flex: none; background: repeating-linear-gradient(#a0a0a0 0 2px, transparent 2px 4px) no-repeat 3px 0 / 2px 100%, #e6e6e6; }

.workspace { flex: 1; min-width: 0; display: grid; grid-template: minmax(0, 1fr) 17px / minmax(0, 1fr) 17px; border-left: 1px solid #444; }
.workspace { grid-template-areas: "view vs" "tabs grip"; border-bottom: 1px solid #d0d0d0; }
.view { grid-area: view; display: grid; grid-template: 19px minmax(0, 1fr) / 18px minmax(0, 1fr); border-top: 2px solid #444; }
.corner { background: #fff; border-right: 1px solid #000; border-bottom: 1px solid #000; overflow: hidden; }
.ruler-h { width: 100%; height: 19px; background: linear-gradient(#fff, #d8d8d8); border-bottom: 1px solid #000; }
.ruler-v { width: 18px; height: 0; min-height: 100%; background: linear-gradient(to right, #fff, #d0d0d0); border-right: 1px solid #000; }
.ruler-h text, .ruler-v text { font-size: 11px; }
.ruler-h path, .ruler-v path { stroke: #222; shape-rendering: crispEdges; }
.canvas { background: #9199af; padding-left: 414px; overflow: hidden; }
.paper { width: 788px; height: 0; min-height: 100%; background: #fff; border-right: 5px solid #aaa; shape-rendering: crispEdges; }
.paper .grid { stroke: #bdbdbd; stroke-dasharray: 4 3; }
.paper .frame { fill: none; stroke: #000; stroke-width: 3; }
.page-scroll { grid-area: vs; width: 17px; border-right: 1px solid #fff; }
.page-scroll .thumb { height: 73%; }

.tabs { grid-area: tabs; width: 50%; display: flex; border-top: 1px solid #000; background: linear-gradient(#fff, #e0e0e0); font: 14px/16px "Liberation Mono", "Noto Sans CJK SC", monospace; }
.nav { width: 17px; background: #f4f4f4; }
.nav svg { fill: #555; }
.tab { width: 64px; background: #d8d8d8; justify-content: space-between; padding: 0 5px 0 4px; }
.slash { background: #d8d8d8; }
.tab.active { width: 66px; background: #fff; font-weight: bold; padding-left: 2px; }
.slash:last-child { background: #fff; }
.hscroll { grid-area: tabs; margin-left: 50%; display: flex; align-items: center; background: #f0f0f0; padding-right: 4px; }
.hsplit { width: 5px; height: 16px; border-right: 1px solid #999; background: #eee; margin-right: 4px; }
.hscroll button:last-child { margin-left: auto; }
.sizegrip { grid-area: grip; background: #f0f0f0; display: flex; align-items: flex-end; justify-content: center; padding-bottom: 2px; }

.dock { width: 63px; flex: none; display: flex; align-items: flex-start; gap: 1px; border-bottom: 1px solid #999; background: linear-gradient(to right, #dcdcdc, #f5f5f3); }
.dockcol { width: 31px; background: linear-gradient(to right, #fcfcfc, #f4f4f4 50%, #d8d8d8); padding-top: 12px; }
.dockcol button { width: 22px; height: 23px; margin-left: 4px; }
.dock-b button { height: 22px; margin-left: 3px; }
.dock-b svg { fill: none; stroke: #222; stroke-width: 1.4px; }
.dock .picked { background: #d5e6f7; border: 1px solid #4a90d9; }
.hcap { display: block; height: 10px; background: linear-gradient(to right, #e0e0e0, #888); }
.dock .level { flex-direction: column; font-size: 9px; line-height: 9px; }
.dock .legend-btn { font-size: 13px; font-weight: bold; }
.dock .glyph { font: 18px/20px "Liberation Serif", serif; }
.dock .art { font-weight: bold; font-style: italic; color: #00a; }

.tb-arrange { flex: none; width: 892px; height: 29px; margin-bottom: 1px; }
.statusbar { flex: none; display: flex; align-items: center; height: 22px; border-top: 1px solid #999; padding-left: 2px; }
.ready { flex: 1; padding-top: 4px; }
.cell { height: 18px; margin: 2px 2px 0 0; border: 1px solid #999; border-right-color: #aaa; }
.c1 { width: 202px; } .c2 { width: 242px; } .c3 { width: 336px; }

.dialog { position: absolute; left: 509px; top: 285px; width: 606px; border: 1px solid #1a80d8; background: #f0f0f0; box-shadow: 0 5px 16px rgba(0, 0, 0, .35); font: 12px/16px "Noto Sans", "Noto Sans CJK SC", sans-serif; }
.dlg-title { display: flex; justify-content: space-between; height: 25px; padding: 0 9px 1px 3px; background: #fff; align-items: center; }
.dlg-body { padding: 9px 12px 22px 14px; }
fieldset { margin: 0; padding: 0; border: 1px solid #dcdcdc; min-width: 0; }
legend { margin-left: 6px; padding: 0 2px; }
.prow { display: flex; align-items: center; height: 25px; padding-left: 13px; }
.prow.first { height: 28px; margin: 12px 0 8px; }
.prow:last-child { margin-bottom: 13px; }
.prow > :first-child { width: 63px; flex: none; }
.select { position: relative; width: 326px; height: 26px; }
.select select { appearance: none; width: 100%; height: 26px; padding: 0 20px 1px 3px; border: 1px solid #adadad; background: #e1e1e1; }
.select svg { position: absolute; right: 4px; top: 11px; }
.btn { width: 82px; height: 28px; border: 1px solid #adadad; background: #e1e1e1; }
.props { width: 103px; margin-left: auto; margin-right: 21px; }
.check { display: flex; align-items: center; gap: 3px; }
.check input { appearance: none; width: 13px; height: 13px; border: 1px solid #333; background: #fff; flex: none; }
.check input[type=radio] { border-radius: 50%; }
.check input[type=radio]:checked { background: radial-gradient(circle, #222 0 3px, #fff 4px); }
.tofile { margin: 8px 36px 0 auto; }
.disabled { color: #838383; }
.check input:disabled { border-color: #ccc; }
.pair { display: flex; gap: 9px; margin: 9px 0 19px 2px; }
.range { flex: 1; }
.copies { width: 254px; }
.rrow { display: flex; align-items: center; height: 34px; padding-left: 8px; }
legend + .rrow { margin-top: 8px; }
.rrow:last-child { margin-bottom: 7px; }
.range label:not(.check) { display: flex; align-items: center; gap: 4px; }
.rrow input[type=text] { width: 46px; height: 26px; border: 1px solid #7a7a7a; background: #fff; padding: 0 4px 3px; }
.pages { width: 115px; }
.from { width: 81px; }
.from, .to { justify-content: flex-end; }
.to { width: 101px; }
.copies .rrow { padding-left: 13px; }
.spin { display: flex; margin: 0 37px 0 auto; border: 1px solid #aaa; }
.rrow .spin input { width: 30px; height: 24px; border: 0; padding-left: 3px; }
.spin span { display: flex; flex-direction: column; width: 16px; }
.spin button { flex: 1; border: 1px solid #aaa; background: #f0f0f0; }
.copies .collate { margin: 15px 0 26px; padding-left: 32px; gap: 16px; }
.sheets text { font-size: 15px; }
.dlg-foot { display: flex; justify-content: flex-end; gap: 13px; padding-right: 1px; }
.primary { border: 2px solid #0078d7; }

.chat { position: absolute; right: 2px; top: 50px; width: 257px; border: 1px solid #999; background: #fff; box-shadow: 0 3px 8px rgba(0, 0, 0, .4); }
.chat-title { display: flex; align-items: center; height: 25px; padding: 0 17px 0 3px; gap: 5px; color: #999; }
.chat-title .win-controls { margin-left: auto; }
.chat-body { display: flex; gap: 7px; height: 39px; padding: 2px; border: 1px solid #17738c; border-bottom: 0; background: linear-gradient(#149dc4, #b5e0f2); align-items: flex-start; }
.chat-body a { flex: 1; height: 30px; display: flex; align-items: center; gap: 4px; padding-left: 2px; background: #fafafa; color: #17376e; text-decoration: none; }
.chat-body b { font-size: 14px; white-space: nowrap; }
.chat-body em { font-style: normal; color: #ff4500; }
.upload { position: absolute; right: 107px; top: 27px; width: 104px; height: 25px; border: 1px solid #1b8fd6; border-radius: 3px; overflow: hidden; align-items: stretch; }
.cloud { width: 29px; background: #2b9dea; display: flex; align-items: center; justify-content: center; }
.upload-text { flex: 1; line-height: 24px; color: #3a6c96; background: linear-gradient(#e4f4fe, #a4d8f8); }

.ime { position: absolute; right: 0; bottom: 0; height: 25px; display: flex; align-items: center; background: #fff; border: 1px solid #a9c4e4; color: #1f72c8; }
.ime button { width: 22px; }
.ime button svg { fill: #1f72c8; }
.ime-logo { margin: -2px 2px 0 -24px; }
.zh { font-size: 14px; font-weight: bold; }
```
FILE: script.js
```javascript
// One centimetre on screen at 96 dpi.
const CM = 37.8;
const ORIGIN_X = 414;
const ORIGIN_Y = -1;

function horizontalRuler(width) {
  let ticks = "", labels = "";
  for (let mm = -109; ORIGIN_X + mm * CM / 10 < width; mm++) {
    const x = Math.round(ORIGIN_X + mm * CM / 10);
    const top = mm % 100 === 0 ? 0 : mm % 10 === 0 ? 7 : 11;
    ticks += `M${x}.5 ${top}V18`;
    if (mm % 10 === 0 && x + 18 < width) labels += `<text x="${x + 3}" y="10">${mm / 10}</text>`;
  }
  return `<path d="${ticks}"/><text x="2" y="10">-11</text>${labels}`;
}

function verticalRuler(height) {
  let ticks = "", labels = "";
  for (let mm = 0; ORIGIN_Y + mm * CM / 10 < height; mm++) {
    const y = Math.round(ORIGIN_Y + mm * CM / 10);
    const left = mm % 100 === 0 ? 0 : mm % 10 === 0 ? 7 : 11;
    ticks += `M${left} ${y}.5H17`;
    if (mm % 10 === 0 && y + 12 < height) labels += `<text transform="translate(10 ${y + 2}) rotate(-90)" text-anchor="end">${mm / 10}</text>`;
  }
  return `<path d="${ticks}"/>${labels}`;
}

function sheet() {
  let lines = "";
  for (let i = 0; i < 21; i++) lines += `M${Math.round(i * CM)}.5 0V2000`;
  for (let i = 1; i < 50; i++) lines += `M0 ${Math.round(ORIGIN_Y + i * CM)}.5H783`;
  return `<path class="grid" d="${lines}"/><rect class="frame" x="37.5" y="36.5" width="708" height="1200"/>`;
}

function draw() {
  const h = document.getElementById("ruler-h");
  const v = document.getElementById("ruler-v");
  h.innerHTML = horizontalRuler(h.getBoundingClientRect().width);
  v.innerHTML = verticalRuler(v.getBoundingClientRect().height);
}

document.getElementById("paper").innerHTML = sheet();
draw();
window.addEventListener("resize", draw);
```
